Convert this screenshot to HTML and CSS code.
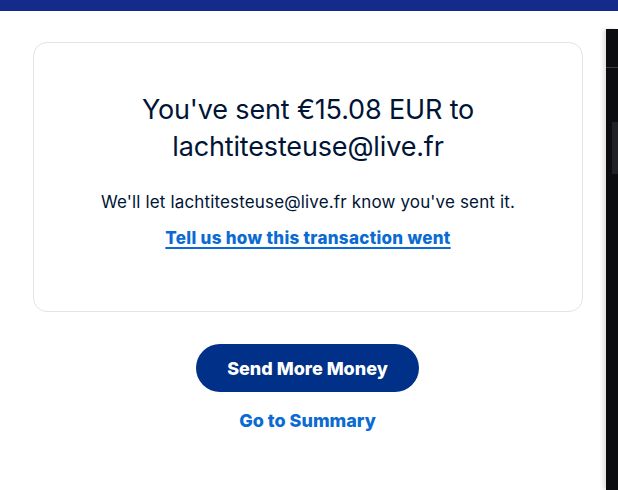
FILE: index.html
```html
<!DOCTYPE html>
<html>
<head>
<meta charset="utf-8">
<link rel="stylesheet" href="styles.css">
</head>
<body>
<div class="topbar"></div>
<div class="page">
  <main class="content">
    <section class="card">
      <h1 class="title">You've sent €15.08 EUR to<br>lachtitesteuse@live.fr</h1>
      <p class="note">We'll let lachtitesteuse@live.fr know you've sent it.</p>
      <a class="feedback" href="#">Tell us how this transaction went</a>
    </section>
    <div class="actions">
      <button class="primary">Send More Money</button>
      <a class="secondary" href="#">Go to Summary</a>
    </div>
  </main>
  <aside class="sidepanel">
    <div class="side-top"></div>
    <div class="side-tab"></div>
  </aside>
</div>
</body>
</html>
```
FILE: styles.css
```css
* { box-sizing: border-box; }
html, body { margin: 0; padding: 0; background: #fff; }
body {
  width: 618px;
  height: 490px;
  overflow: hidden;
  font-family: Inter, "Noto Sans", "Liberation Sans", sans-serif;
  color: #001435;
}
.topbar {
  height: 11px;
  background: #152b8b;
}
.page {
  display: flex;
  height: 479px;
}
.content {
  width: 606px;
  padding: 31px 0 0 33px;
}
.card {
  width: 550px;
  height: 270px;
  border: 1px solid #e3e3e3;
  border-radius: 14px;
  display: flex;
  flex-direction: column;
  align-items: center;
  padding-top: 48px;
}
.title {
  margin: 0;
  font-size: 27px;
  font-weight: 400;
  line-height: 37px;
  text-align: center;
  letter-spacing: -0.15px;
}
.note {
  margin: 26px 0 0;
  font-size: 17px;
  line-height: 22px;
  letter-spacing: 0.15px;
}
.feedback {
  margin-top: 14px;
  font-size: 17px;
  font-weight: 800;
  color: #0a6bd2;
  letter-spacing: 0.3px;
  text-decoration: underline;
  text-decoration-thickness: 2px;
  text-underline-offset: 3px;
  line-height: 22px;
}
.actions {
  width: 549px;
  display: flex;
  flex-direction: column;
  align-items: center;
  padding-top: 32px;
}
.primary {
  width: 223px;
  height: 48px;
  border: none;
  border-radius: 24px;
  background: #003087;
  color: #fff;
  font-family: inherit;
  font-size: 18px;
  font-weight: 800;
}
.secondary {
  margin-top: 18px;
  font-size: 18px;
  font-weight: 800;
  color: #0a6bd2;
  text-decoration: none;
  line-height: 22px;
}
.sidepanel {
  width: 12px;
  margin-top: 18px;
  background: #0b0c10;
  box-shadow: -3px 0 4px rgba(0,0,0,0.12);
  display: flex;
  flex-direction: column;
}
.side-top {
  height: 39px;
  border-bottom: 1px solid #3a3b40;
}
.side-tab {
  margin: 54px 0 0 6px;
  height: 52px;
  background: #202126;
}
```
